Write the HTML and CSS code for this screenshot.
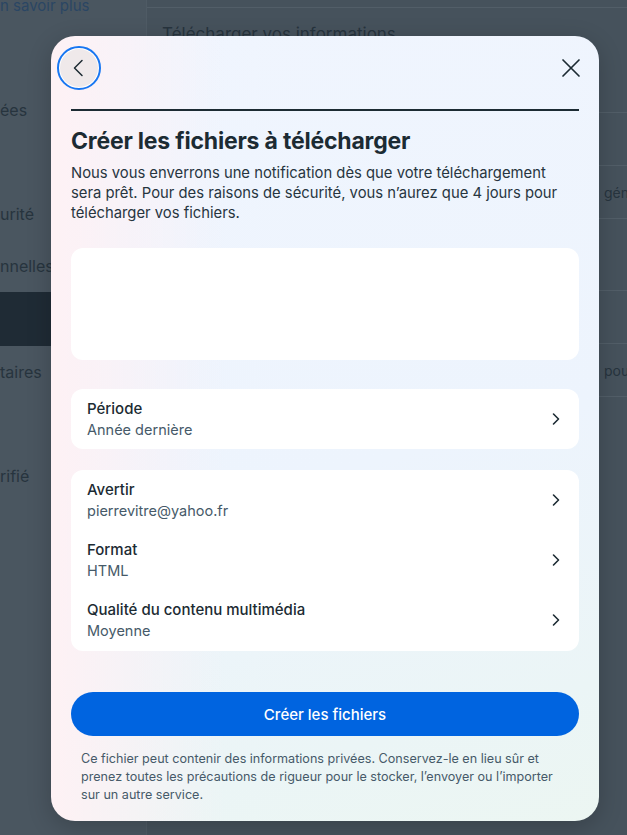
FILE: index.html
```html
<!DOCTYPE html>
<html lang="fr">
<head>
  <meta charset="UTF-8">
  <meta name="viewport" content="width=device-width, initial-scale=1.0">
  <title>Télécharger vos informations</title>
  <link rel="stylesheet" href="styles.css">
</head>
<body>
  <div class="page">
    <!-- Sidebar (scrolled, dimmed behind the dialog) -->
    <nav class="sidebar">
      <a class="side-link">n savoir plus</a>
      <div class="side-item">ées</div>
      <div class="side-item"></div>
      <div class="side-item">urité</div>
      <div class="side-item">nnelles</div>
      <div class="side-item active"></div>
      <div class="side-item">taires</div>
      <div class="side-item"></div>
      <div class="side-item">rifié</div>
    </nav>

    <main class="content">
      <div class="content-card">
        <h2>Télécharger vos informations</h2>
        <div class="row"></div>
        <div class="row"></div>
        <div class="row"><span>générer</span></div>
        <div class="row tall"></div>
        <div class="row"></div>
        <div class="row"><span>pour</span></div>
      </div>
    </main>
  </div>

  <!-- Dialog -->
  <div class="dialog" role="dialog">
    <div class="dialog-header">
      <button class="icon-btn back-btn" aria-label="Retour">
        <svg width="20" height="20" viewBox="0 0 20 20"><path d="M13 2.5 5.5 10l7.5 7.5" fill="none" stroke="#1c2b33" stroke-width="1.5" stroke-linecap="round" stroke-linejoin="round"/></svg>
      </button>
      <button class="icon-btn" aria-label="Fermer">
        <svg width="22" height="22" viewBox="0 0 22 22"><path d="M3 3l16 16M19 3 3 19" fill="none" stroke="#1c2b33" stroke-width="1.7" stroke-linecap="round"/></svg>
      </button>
    </div>

    <hr class="rule">

    <h1>Créer les fichiers à télécharger</h1>
    <p class="intro">Nous vous enverrons une notification dès que votre téléchargement<br>sera prêt. Pour des raisons de sécurité, vous n’aurez que 4 jours pour télécharger vos fichiers.</p>

    <div class="panel empty"></div>

    <div class="panel">
      <div class="option">
        <div>
          <div class="opt-title">Période</div>
          <div class="opt-value">Année dernière</div>
        </div>
        <svg class="chev" width="10" height="14" viewBox="0 0 10 14"><path d="M2.5 2 7.5 7l-5 5" fill="none" stroke="#1c2b33" stroke-width="1.6" stroke-linecap="round" stroke-linejoin="round"/></svg>
      </div>
    </div>

    <div class="panel group">
      <div class="option">
        <div>
          <div class="opt-title">Avertir</div>
          <div class="opt-value">pierrevitre@yahoo.fr</div>
        </div>
        <svg class="chev" width="10" height="14" viewBox="0 0 10 14"><path d="M2.5 2 7.5 7l-5 5" fill="none" stroke="#1c2b33" stroke-width="1.6" stroke-linecap="round" stroke-linejoin="round"/></svg>
      </div>
      <div class="option">
        <div>
          <div class="opt-title">Format</div>
          <div class="opt-value">HTML</div>
        </div>
        <svg class="chev" width="10" height="14" viewBox="0 0 10 14"><path d="M2.5 2 7.5 7l-5 5" fill="none" stroke="#1c2b33" stroke-width="1.6" stroke-linecap="round" stroke-linejoin="round"/></svg>
      </div>
      <div class="option">
        <div>
          <div class="opt-title">Qualité du contenu multimédia</div>
          <div class="opt-value">Moyenne</div>
        </div>
        <svg class="chev" width="10" height="14" viewBox="0 0 10 14"><path d="M2.5 2 7.5 7l-5 5" fill="none" stroke="#1c2b33" stroke-width="1.6" stroke-linecap="round" stroke-linejoin="round"/></svg>
      </div>
    </div>

    <button class="primary-btn">Créer les fichiers</button>

    <p class="notice">Ce fichier peut contenir des informations privées. Conservez-le en lieu sûr et prenez toutes les précautions de rigueur pour le stocker, l’envoyer ou l’importer sur un autre service.</p>
  </div>
</body>
</html>
```

FILE: styles.css
```css
:root {
  --text: #1c2b33;
  --text-muted: #465a69;
  --blue: #0064e0;
  --dim-side: #4a5660;
  --dim-main: #46525c;
  --dim-line: #525e68;
  --dim-text: #27343e;
}

* {
  margin: 0;
  padding: 0;
  box-sizing: border-box;
  font-family: Inter, 'Noto Sans', sans-serif;
}

html, body {
  height: 100%;
}

body {
  background-color: var(--dim-main);
  color: var(--text);
  overflow: hidden;
}

/* Page behind the dialog */
.page {
  display: flex;
  height: 100%;
}

.sidebar {
  width: 147px;
  flex-shrink: 0;
  background-color: var(--dim-side);
  border-right: 1px solid #4f5b65;
  display: flex;
  flex-direction: column;
  color: var(--dim-text);
  font-size: 16px;
}

.side-link {
  color: #2a4664;
  font-size: 15px;
  line-height: 18px;
  margin-top: -3px;
  margin-bottom: 69px;
}

.side-item {
  height: 52px;
  line-height: 52px;
  white-space: nowrap;
}

.side-item.active {
  background-color: #1f2b35;
  height: 54px;
}

.content {
  flex: 1;
  min-width: 0;
  border-top: 1px solid var(--dim-line);
  margin-top: 7px;
}

.content-card {
  padding: 14px 0 0 15px;
  color: var(--dim-text);
}

.content-card h2 {
  font-size: 17px;
  font-weight: 400;
  line-height: 24px;
  height: 38px;
  white-space: nowrap;
}

.row {
  height: 53px;
  border-bottom: 1px solid var(--dim-line);
  font-size: 14px;
  display: flex;
  align-items: center;
  padding-left: 442px;
  white-space: nowrap;
}

.row.tall {
  height: 72px;
}

/* Dialog */
.dialog {
  position: absolute;
  top: 36px;
  left: 51px;
  width: 548px;
  height: 785px;
  border-radius: 24px;
  padding: 12px 20px 0;
  display: flex;
  flex-direction: column;
  background:
    linear-gradient(90deg, rgba(255, 241, 244, 0.95) 0%, rgba(255, 241, 244, 0) 32%),
    linear-gradient(165deg, #f0f5fe 0%, #edf4fd 55%, #ebf5f6 85%, #ecf6f2 100%);
  box-shadow: 0 6px 24px rgba(0, 0, 0, 0.2);
}

.dialog-header {
  display: flex;
  justify-content: space-between;
  margin: 0 -12px;
}

.icon-btn {
  width: 40px;
  height: 40px;
  border: none;
  border-radius: 50%;
  background: none;
  display: flex;
  align-items: center;
  justify-content: center;
  cursor: pointer;
}

.back-btn {
  background-color: #efe9ea;
  outline: 2px solid #1877f2;
  box-shadow: inset 0 0 0 1px #ffffff;
}

.rule {
  border: none;
  border-top: 2px solid var(--text);
  margin-top: 21px;
}

.dialog h1 {
  font-size: 23px;
  font-weight: 700;
  line-height: 30px;
  margin-top: 15px;
  letter-spacing: -0.2px;
}

.intro {
  font-size: 14.8px;
  line-height: 20px;
  margin-top: 7px;
  color: #27353f;
}

.panel {
  background-color: white;
  border-radius: 12px;
  margin-top: 21px;
}

.panel.empty {
  height: 112px;
  margin-top: 25px;
  margin-bottom: 8px;
}

.option {
  display: flex;
  align-items: center;
  justify-content: space-between;
  padding: 10px 16px;
  height: 60px;
}

.group {
  padding-bottom: 1px;
}

.opt-title {
  font-size: 15px;
  font-weight: 500;
  line-height: 20px;
}

.opt-value {
  font-size: 14.5px;
  line-height: 21px;
  color: var(--text-muted);
}

.chev {
  margin-right: 2px;
}

.primary-btn {
  margin-top: 41px;
  height: 44px;
  border: none;
  border-radius: 22px;
  background-color: var(--blue);
  color: white;
  font-size: 15px;
  font-weight: 500;
  cursor: pointer;
}

.notice {
  margin-top: 14px;
  padding: 0 10px;
  font-size: 12.6px;
  line-height: 18px;
  color: var(--text-muted);
}
```
